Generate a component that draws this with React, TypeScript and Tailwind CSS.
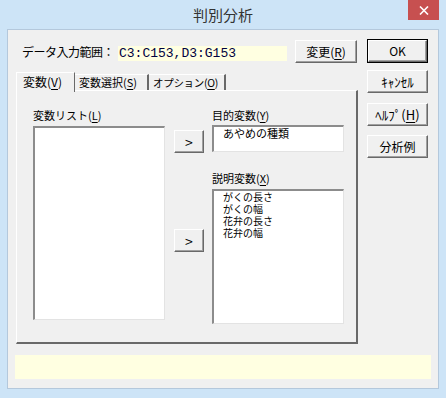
import React from "react";

const jp = "font-['Noto_Sans_CJK_JP',sans-serif]";

function Btn({ children, className = "" }: { children: React.ReactNode; className?: string }) {
  return (
    <div
      className={`flex items-center justify-center bg-[#f0f0f0] border-t border-l border-white border-r border-b border-r-[#696969] border-b-[#696969] shadow-[inset_-1px_-1px_0_#a0a0a0] leading-[12px] text-black ${className}`}
    >
      {children}
    </div>
  );
}

function Sunken({ children, className = "" }: { children?: React.ReactNode; className?: string }) {
  return (
    <div
      className={`bg-white border-t-2 border-l-2 border-r border-b border-t-[#8c8c8c] border-l-[#8c8c8c] border-r-[#e3e3e3] border-b-[#e3e3e3] ${className}`}
    >
      {children}
    </div>
  );
}

export default function App() {
  return (
    <div className={`w-[446px] h-[398px] bg-[#cde4f7] ${jp} text-black overflow-hidden`}>
      {/* title bar */}
      <div className="grid grid-cols-[1fr_auto_1fr] h-[29px]">
        <div />
        <div className="pt-[4px] text-[15px] leading-[22px] text-[#333]">判別分析</div>
        <div className="flex justify-end items-start pr-[7px]">
          <div className="w-[31px] h-[20px] bg-[#c75050] flex items-center justify-center">
            <svg width="10" height="9" viewBox="0 0 10 9">
              <path d="M1 0.5 L9 8.5 M9 0.5 L1 8.5" stroke="#fff" strokeWidth="1.6" />
            </svg>
          </div>
        </div>
      </div>

      {/* client */}
      <div className="ml-[7px] w-[432px] h-[360px] bg-[#f0f0f0] border border-[#b4c8dc] flex flex-col">
        <div className="flex pl-[7px]">
          {/* left column */}
          <div className="w-[343px] flex flex-col">
            <div className="mt-[10px] flex items-start h-[23px]">
              <div className="ml-[7px] w-[96px] text-[12px] leading-[23px] whitespace-nowrap tracking-[-0.5px]">
                データ入力範囲：
              </div>
              <div className="mt-[6px] w-[169px] h-[15px] bg-[#ffffe1] pl-[1px] font-['Liberation_Mono',monospace] text-[13px] leading-[15px] text-[#000040]">
                C3:C153,D3:G153
              </div>
              <Btn className="ml-[8px] w-[62px] h-[23px] text-[12px]">
                変更(<u className="underline-offset-2">R</u>)
              </Btn>
            </div>

            {/* tabs */}
            <div className="mt-[9px] ml-[1px] flex items-end h-[18px]">
              <div className="relative z-10 mb-[-2px] w-[59px] h-[20px] bg-[#f0f0f0] border-t border-l border-white border-r border-r-[#696969] pl-[6px] text-[12px] leading-[16px] pt-[1px] whitespace-nowrap">
                変数(<u className="underline-offset-2">V</u>)
              </div>
              <div className="w-[74px] h-[16px] border-t border-white border-r-2 border-r-[#696969] pl-[4px] text-[11px] leading-[15px] whitespace-nowrap">
                変数選択(<u className="underline-offset-2">S</u>)
              </div>
              <div className="w-[77px] h-[16px] border-t border-white border-r-2 border-r-[#696969] pl-[4px] text-[10.5px] tracking-[-0.3px] leading-[15px] whitespace-nowrap">
                オプション(<u className="underline-offset-2">O</u>)
              </div>
            </div>

            {/* panel */}
            <div className="ml-[1px] w-[342px] h-[254px] border-t border-l border-white border-r-2 border-b-2 border-r-[#696969] border-b-[#696969] flex pl-[16px] pt-[18px]">
              <div className="w-[132px] flex flex-col">
                <div className="text-[11px] leading-[12px] whitespace-nowrap">
                  変数リスト(<u className="underline-offset-2">L</u>)
                </div>
                <Sunken className="mt-[5px] h-[194px]" />
              </div>
              <div className="ml-[9px] w-[30px] flex flex-col">
                <Btn className="mt-[21px] h-[23px] text-[14px]">&gt;</Btn>
                <Btn className="mt-[76px] h-[23px] text-[14px]">&gt;</Btn>
              </div>
              <div className="ml-[8px] w-[132px] flex flex-col">
                <div className="text-[11px] leading-[12px] whitespace-nowrap">
                  目的変数(<u className="underline-offset-2">Y</u>)
                </div>
                <Sunken className="mt-[4px] h-[27px] pl-[9px] text-[11px] leading-[13px]">あやめの種類</Sunken>
                <div className="mt-[20px] text-[11px] leading-[12px] whitespace-nowrap">
                  説明変数(<u className="underline-offset-2">X</u>)
                </div>
                <Sunken className="mt-[5px] h-[135px] pl-[9px] text-[10px] leading-[12px]">
                  <div className="h-[12px]">がくの長さ</div>
                  <div className="h-[12px]">がくの幅</div>
                  <div className="h-[12px]">花弁の長さ</div>
                  <div className="h-[12px]">花弁の幅</div>
                </Sunken>
              </div>
            </div>
          </div>

          {/* right column */}
          <div className="ml-[9px] w-[61px] flex flex-col">
            <div className="mt-[9px] h-[24px] border border-black">
              <Btn className="h-full text-[12px]">OK</Btn>
            </div>
            <Btn className="mt-[7px] h-[23px] text-[13px]">ｷｬﾝｾﾙ</Btn>
            <Btn className="mt-[10px] h-[23px] text-[13px]">
              ﾍﾙﾌﾟ(<u className="underline-offset-2">H</u>)
            </Btn>
            <Btn className="mt-[9px] h-[23px] text-[12px]">分析例</Btn>
          </div>
        </div>

        <div className="mt-[11px] ml-[7px] w-[416px] h-[24px] bg-[#ffffe1]" />
      </div>
    </div>
  );
}
